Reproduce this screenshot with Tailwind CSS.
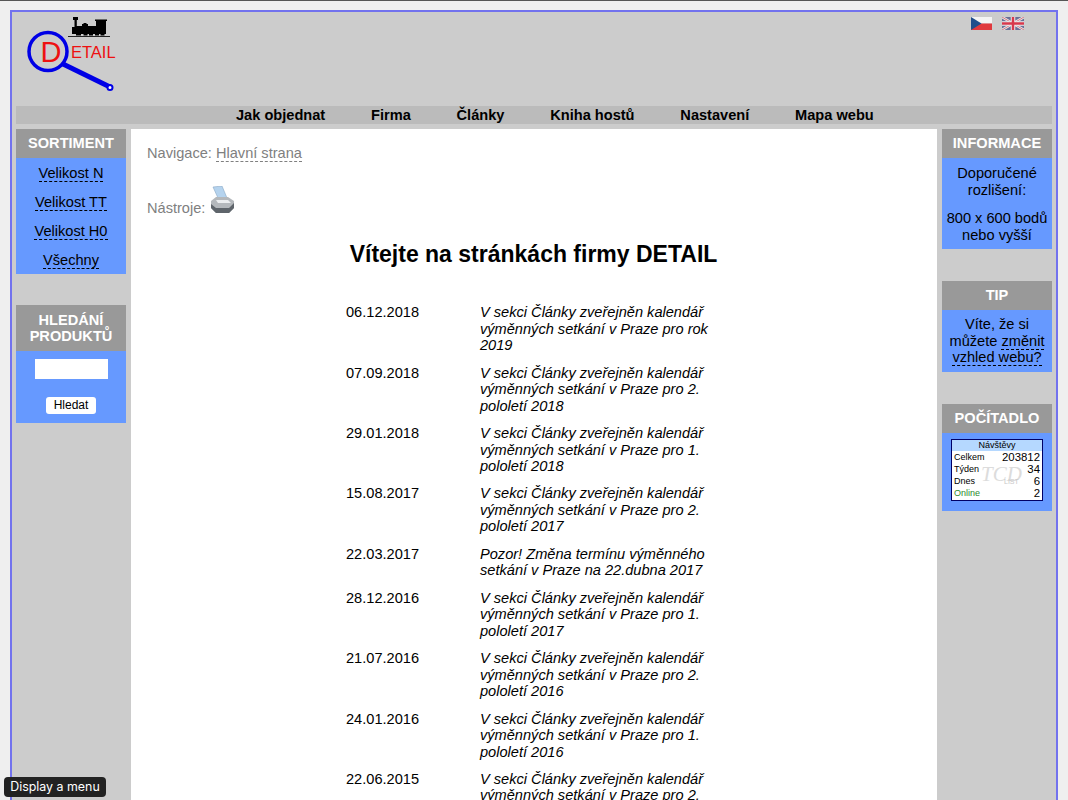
<!doctype html>
<html lang="cs">
  <head>
    <meta charset="utf-8">
    <title>Detail</title>
    <script src="https://cdn.jsdelivr.net/npm/@tailwindcss/browser@4"></script>
  </head>
  <body class="relative h-[800px] overflow-hidden bg-[#efefef] font-['Liberation_Sans',Arial,sans-serif] text-[14.6px] leading-[16.5px] text-black">
    <div class="h-px bg-[#555]"></div>
    <!-- Page frame -->
    <div class="mx-[10px] mt-[9px] h-[900px] border-2 border-[#7272ee] bg-[#cccccc] px-[4px]">
      <!-- Header -->
      <div class="relative h-[94px]">
        <svg class="absolute left-[10px] top-[2px]" width="95" height="82" viewBox="0 0 95 82">
          <path d="M42 22.500H84" stroke="#222" stroke-width="1"/>
          <path d="M47 3h5v3h-1.200v6H56v-2h1.500v-1h3v1H62v2h8V7h-1V5.500h12V7h-1v13h-1.500v1.500h-4V20h-1.500v1.500h-4V20H67v1.500h-4V20h-1.500v1.500h-4V20H55v1.500h-5V20h-4v-7h2.500V6H47z" fill="#000"/>
          <circle cx="22" cy="37.500" r="19" fill="none" stroke="#0000e6" stroke-width="3.500"/>
          <path d="M37 50L84 73" stroke="#0000e6" stroke-width="5"/>
          <circle cx="84" cy="73.500" r="2.500" fill="#fff" stroke="#0000e6" stroke-width="2"/>
          <text x="14.500" y="48" font-size="29" fill="#ee1111" font-family="Liberation Sans">D</text>
          <text x="45" y="44" font-size="16.500" fill="#ee1111" font-family="Liberation Sans">ETAIL</text>
        </svg>
        <div class="absolute right-[28px] top-[5px] flex gap-[10px]">
          <svg width="21" height="13" viewBox="0 0 21 13">
            <rect width="21" height="6.500" fill="#f4f4f4"/>
            <rect y="6.500" width="21" height="6.500" fill="#e0393e"/>
            <path d="M0 0L10.500 6.500L0 13z" fill="#1f4e8c"/>
          </svg>
          <svg width="22" height="13" viewBox="0 0 22 13">
            <rect width="22" height="13" fill="#6a6f96"/>
            <path d="M0 0L22 13M22 0L0 13" stroke="#e8e8e8" stroke-width="2.500"/>
            <path d="M0 0L22 13M22 0L0 13" stroke="#d87a88" stroke-width="1"/>
            <path d="M11 0V13M0 6.500H22" stroke="#eeeeee" stroke-width="4.500"/>
            <path d="M11 0V13M0 6.500H22" stroke="#d8384c" stroke-width="2.500"/>
          </svg>
        </div>
      </div>
      <!-- Top nav -->
      <nav class="flex h-[18px] items-center gap-[45.800px] bg-[#bbbbbb] pl-[220px] font-bold">
        <a>Jak objednat</a>
        <a>Firma</a>
        <a>Články</a>
        <a>Kniha hostů</a>
        <a>Nastavení</a>
        <a>Mapa webu</a>
      </nav>
      <div class="mt-[5px] flex items-start gap-[5px]">
        <!-- Left column -->
        <aside class="flex w-[110px] flex-col gap-[31px] text-center">
          <section>
            <h2 class="flex h-[29px] items-center justify-center bg-[#999999] font-bold text-white">SORTIMENT</h2>
            <ul class="flex h-[116px] flex-col items-center gap-[12px] bg-[#6699ff] pt-[7px]">
              <li class="border-b border-dashed border-black leading-[16px]">Velikost N</li>
              <li class="border-b border-dashed border-black leading-[16px]">Velikost TT</li>
              <li class="border-b border-dashed border-black leading-[16px]">Velikost H0</li>
              <li class="border-b border-dashed border-black leading-[16px]">Všechny</li>
            </ul>
          </section>
          <section>
            <h2 class="flex h-[46px] items-center justify-center bg-[#999999] font-bold text-white">HLEDÁNÍ PRODUKTŮ</h2>
            <div class="flex h-[72px] flex-col items-center bg-[#6699ff] pt-[8px]">
              <input type="text" class="h-[20px] w-[73px] bg-white">
              <button class="mt-[18px] h-[17px] w-[50px] rounded-[3px] bg-white text-[12px] leading-[17px]">Hledat</button>
            </div>
          </section>
        </aside>
        <!-- Main -->
        <main class="h-[800px] w-[806px] bg-white pl-[16px] pt-[16px] text-[#808080]">
          <p>Navigace: <span class="border-b border-dashed border-[#808080]">Hlavní strana</span></p>
          <div class="mt-[16px] flex h-[40px] items-end">
            <span class="mb-[1px]">Nástroje:</span>
            <svg class="mb-[4px] ml-[5px]" width="25" height="28" viewBox="0 0 25 28">
              <path d="M3 1L12 0L17 12H8z" fill="#b5d3ee" stroke="#8aa8c4" stroke-width="0.600"/>
              <path d="M1 15L6 11H18L24 15V22L19 27H6L1 22z" fill="#b4b8bc"/>
              <path d="M1 18L6 22H19L24 17V22L19 27H6L1 22z" fill="#5f656b"/>
              <path d="M6 14H18L21 17H8z" fill="#eceef0"/>
            </svg>
          </div>
          <h1 class="mt-[23px] w-[773px] text-center text-[23px] leading-[26px] font-bold text-black">Vítejte na stránkách firmy DETAIL</h1>
          <!-- News -->
          <div class="ml-[199px] mt-[37.800px] flex flex-col gap-[10.900px] text-black">
            <div class="flex"><span class="w-[134px]">06.12.2018</span><em class="w-[240px]">V sekci Články zveřejněn kalendář výměnných setkání v Praze pro rok 2019</em></div>
            <div class="flex"><span class="w-[134px]">07.09.2018</span><em class="w-[240px]">V sekci Články zveřejněn kalendář výměnných setkání v Praze pro 2. pololetí 2018</em></div>
            <div class="flex"><span class="w-[134px]">29.01.2018</span><em class="w-[240px]">V sekci Články zveřejněn kalendář výměnných setkání v Praze pro 1. pololetí 2018</em></div>
            <div class="flex"><span class="w-[134px]">15.08.2017</span><em class="w-[240px]">V sekci Články zveřejněn kalendář výměnných setkání v Praze pro 2. pololetí 2017</em></div>
            <div class="flex"><span class="w-[134px]">22.03.2017</span><em class="w-[240px]">Pozor! Změna termínu výměnného setkání v Praze na 22.dubna 2017</em></div>
            <div class="flex"><span class="w-[134px]">28.12.2016</span><em class="w-[240px]">V sekci Články zveřejněn kalendář výměnných setkání v Praze pro 1. pololetí 2017</em></div>
            <div class="flex"><span class="w-[134px]">21.07.2016</span><em class="w-[240px]">V sekci Články zveřejněn kalendář výměnných setkání v Praze pro 2. pololetí 2016</em></div>
            <div class="flex"><span class="w-[134px]">24.01.2016</span><em class="w-[240px]">V sekci Články zveřejněn kalendář výměnných setkání v Praze pro 1. pololetí 2016</em></div>
            <div class="flex"><span class="w-[134px]">22.06.2015</span><em class="w-[240px]">V sekci Články zveřejněn kalendář výměnných setkání v Praze pro 2. pololetí 2015</em></div>
          </div>
        </main>
        <!-- Right column -->
        <aside class="flex w-[110px] flex-col gap-[32px] text-center">
          <section>
            <h2 class="flex h-[29px] items-center justify-center bg-[#999999] font-bold text-white">INFORMACE</h2>
            <div class="h-[91px] bg-[#6699ff] pt-[7px]">
              <p>Doporučené rozlišení:</p>
              <p class="mt-[12px]">800 x 600 bodů nebo vyšší</p>
            </div>
          </section>
          <section>
            <h2 class="flex h-[29px] items-center justify-center bg-[#999999] font-bold text-white">TIP</h2>
            <div class="h-[62px] bg-[#6699ff] pt-[6px]">
              Víte, že si můžete <span class="border-b border-dashed border-black">změnit vzhled webu?</span>
            </div>
          </section>
          <section>
            <h2 class="flex h-[29px] items-center justify-center bg-[#999999] font-bold text-white">POČÍTADLO</h2>
            <div class="h-[78px] bg-[#6699ff] pt-[6px]">
              <div class="relative mx-auto h-[62px] w-[92px] border border-[#000066] bg-white text-left text-[9px] leading-[12px]">
                <div class="h-[11px] bg-[#b5d8ff] text-center leading-[11px]">Návštěvy</div>
                <span class="absolute left-[29px] top-[24px] font-['Liberation_Serif',serif] text-[21px] leading-none italic text-[#dcdcdc]">TCD</span>
                <span class="absolute left-[52px] top-[38px] text-[7px] leading-none text-[#c8c8c8]">LIST</span>
                <div class="relative flex justify-between px-[2px]"><span>Celkem</span><span class="text-[11.400px]">203812</span></div>
                <div class="relative flex justify-between px-[2px]"><span>Týden</span><span class="text-[11.400px]">34</span></div>
                <div class="relative flex justify-between px-[2px]"><span>Dnes</span><span class="text-[11.400px]">6</span></div>
                <div class="relative flex justify-between px-[2px]"><span class="text-[#2e8b2e]">Online</span><span class="text-[11.400px]">2</span></div>
              </div>
            </div>
          </section>
        </aside>
      </div>
    </div>
    <!-- Tooltip -->
    <div class="absolute bottom-[3px] left-[4px] flex h-[20px] w-[102px] items-center justify-center rounded-[4px] bg-[#222222] font-['Inter',sans-serif] text-[12.400px] text-white">Display a menu</div>
  </body>
</html>
